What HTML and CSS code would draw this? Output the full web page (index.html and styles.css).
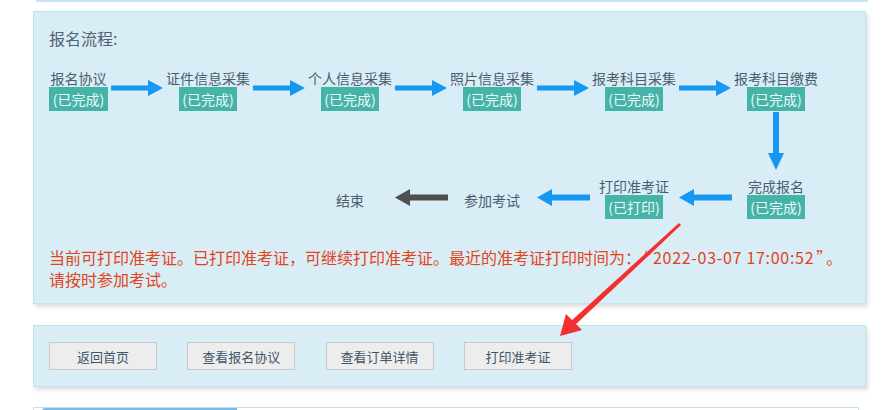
FILE: index.html
```html
<!DOCTYPE html>
<html lang="zh-CN">
<head>
<meta charset="utf-8">
<title>报名流程</title>
<link rel="stylesheet" href="styles.css">
</head>
<body>
<div class="page">
  <div class="prev-box"></div>

  <section class="panel flow-panel">
    <h3 class="flow-title">报名流程:</h3>
    <div class="flow">
      <!-- row 1 -->
      <div class="step c1 r1"><span class="step-name">报名协议</span><span class="badge">(已完成)</span></div>
      <div class="arrow c2 r1"><svg width="52" height="16" viewBox="0 0 52 16"><rect x="0" y="5.5" width="38" height="5" fill="#1697f2"/><polygon points="37,0 52,8 37,16" fill="#1697f2"/></svg></div>
      <div class="step c3 r1"><span class="step-name">证件信息采集</span><span class="badge">(已完成)</span></div>
      <div class="arrow c4 r1"><svg width="52" height="16" viewBox="0 0 52 16"><rect x="0" y="5.5" width="38" height="5" fill="#1697f2"/><polygon points="37,0 52,8 37,16" fill="#1697f2"/></svg></div>
      <div class="step c5 r1"><span class="step-name">个人信息采集</span><span class="badge">(已完成)</span></div>
      <div class="arrow c6 r1"><svg width="52" height="16" viewBox="0 0 52 16"><rect x="0" y="5.5" width="38" height="5" fill="#1697f2"/><polygon points="37,0 52,8 37,16" fill="#1697f2"/></svg></div>
      <div class="step c7 r1"><span class="step-name">照片信息采集</span><span class="badge">(已完成)</span></div>
      <div class="arrow c8 r1"><svg width="52" height="16" viewBox="0 0 52 16"><rect x="0" y="5.5" width="38" height="5" fill="#1697f2"/><polygon points="37,0 52,8 37,16" fill="#1697f2"/></svg></div>
      <div class="step c9 r1"><span class="step-name">报考科目采集</span><span class="badge">(已完成)</span></div>
      <div class="arrow c10 r1"><svg width="52" height="16" viewBox="0 0 52 16"><rect x="0" y="5.5" width="38" height="5" fill="#1697f2"/><polygon points="37,0 52,8 37,16" fill="#1697f2"/></svg></div>
      <div class="step c11 r1"><span class="step-name">报考科目缴费</span><span class="badge">(已完成)</span></div>

      <!-- down arrow -->
      <div class="down c11 r2"><svg width="16" height="58" viewBox="0 0 16 58"><rect x="5" y="0" width="6" height="42" fill="#1697f2"/><polygon points="0,41 16,41 8,58" fill="#1697f2"/></svg></div>

      <!-- row 2 (right to left) -->
      <div class="step c5 r3 plain"><span class="step-name">结束</span></div>
      <div class="arrow c6 r3"><svg width="53" height="17" viewBox="0 0 53 17"><polygon points="0,8.5 15,0 15,17" fill="#4f4f4f"/><rect x="14" y="5.5" width="39" height="6" fill="#4f4f4f"/></svg></div>
      <div class="step c7 r3 plain"><span class="step-name">参加考试</span></div>
      <div class="arrow c8 r3"><svg width="53" height="17" viewBox="0 0 53 17"><polygon points="0,8.5 15,0 15,17" fill="#1697f2"/><rect x="14" y="5.5" width="39" height="6" fill="#1697f2"/></svg></div>
      <div class="step c9 r3"><span class="step-name">打印准考证</span><span class="badge">(已打印)</span></div>
      <div class="arrow c10 r3"><svg width="53" height="17" viewBox="0 0 53 17"><polygon points="0,8.5 15,0 15,17" fill="#1697f2"/><rect x="14" y="5.5" width="39" height="6" fill="#1697f2"/></svg></div>
      <div class="step c11 r3"><span class="step-name">完成报名</span><span class="badge">(已完成)</span></div>
    </div>
    <p class="notice">当前可打印准考证。已打印准考证，可继续打印准考证。最近的准考证打印时间为：<span class="quote">“</span><span class="time">2022-03-07 17:00:52</span><span class="quote">”</span>。<br>请按时参加考试。</p>
  </section>

  <section class="panel action-panel">
    <button class="btn" type="button">返回首页</button>
    <button class="btn" type="button">查看报名协议</button>
    <button class="btn" type="button">查看订单详情</button>
    <button class="btn" type="button">打印准考证</button>
  </section>

  <div class="next-box"><div class="next-tab"></div></div>

  <svg class="pointer" width="130" height="120" viewBox="0 0 130 120">
    <polygon points="121,1 123,3 16,104 12,100" fill="#f2302f"/>
    <polygon points="2,114 8,92 24,108" fill="#f2302f"/>
  </svg>
</div>
</body>
</html>
```

FILE: styles.css
```css
html, body {
  margin: 0;
  padding: 0;
  background: #ffffff;
}

body {
  font-family: "Noto Sans CJK SC", "Noto Sans", sans-serif;
  width: 890px;
  height: 410px;
  overflow: hidden;
}

.page {
  position: relative;
  padding-left: 33px;
  width: 833px;
}

.prev-box {
  margin-left: 3px;
  width: 832px;
  height: 0;
  border-bottom: 2px solid #c3e3f6;
}

.panel {
  box-sizing: border-box;
  width: 833px;
  background: #d9edf7;
  border: 1px solid #bde5ef;
  box-shadow: 2px 3px 4px rgba(0, 0, 0, 0.13);
}

.flow-panel {
  margin-top: 9px;
  height: 293px;
  padding: 16px 15px 0 15px;
}

.flow-title {
  margin: 0;
  font-size: 16px;
  font-weight: normal;
  line-height: 20px;
  color: #50636f;
}

.flow {
  margin-top: 21px;
  display: grid;
  grid-template-columns: 59px 58px 84px 58px 84px 58px 84px 58px 84px 58px 84px;
  grid-template-rows: 42px 66px 44px;
}

.c1 { grid-column: 1; }
.c2 { grid-column: 2; }
.c3 { grid-column: 3; }
.c4 { grid-column: 4; }
.c5 { grid-column: 5; }
.c6 { grid-column: 6; }
.c7 { grid-column: 7; }
.c8 { grid-column: 8; }
.c9 { grid-column: 9; }
.c10 { grid-column: 10; }
.c11 { grid-column: 11; }
.r1 { grid-row: 1; }
.r2 { grid-row: 2; }
.r3 { grid-row: 3; }

.step {
  display: flex;
  flex-direction: column;
  align-items: center;
}

.step.plain {
  justify-content: center;
  padding-top: 1px;
}

.step-name {
  font-size: 14px;
  line-height: 18px;
  color: #4a5d6c;
  white-space: nowrap;
}

.badge {
  display: block;
  width: 58px;
  height: 24px;
  line-height: 24px;
  text-align: center;
  font-size: 14px;
  color: #eef8f4;
  background: #44b4a8;
}

.c1 .badge {
  width: 59px;
}

.arrow {
  display: flex;
  align-items: center;
  justify-content: center;
  margin-bottom: 4px;
}

.arrow svg,
.down svg {
  display: block;
}

.down {
  display: flex;
  justify-content: center;
  padding-top: 1px;
}

.notice {
  margin: 25px 0 0 0;
  font-size: 16px;
  line-height: 22px;
  color: #e2441a;
}

.notice .quote {
  margin: 0 2px;
}

.notice .time {
  letter-spacing: 0.7px;
}

.action-panel {
  margin-top: 21px;
  height: 62px;
  padding: 16px 15px;
  display: flex;
  gap: 30.3px;
}

.btn {
  box-sizing: border-box;
  width: 108px;
  height: 28px;
  margin: 0;
  padding: 0;
  font-family: "Noto Sans CJK SC", "Noto Sans", sans-serif;
  font-size: 13px;
  color: #3f5669;
  background: #ededed;
  border: 1px solid #c8c8c8;
  border-radius: 0;
}

.next-box {
  margin-top: 20px;
  width: 826px;
  height: 20px;
  box-sizing: border-box;
  border: 1px solid #c3e1f5;
  padding: 0 0 0 8px;
}

.next-tab {
  width: 195px;
  height: 10px;
  background: #72bdf0;
  border-radius: 3px 0 0 0;
}

.pointer {
  position: absolute;
  left: 558px;
  top: 222px;
}
```
